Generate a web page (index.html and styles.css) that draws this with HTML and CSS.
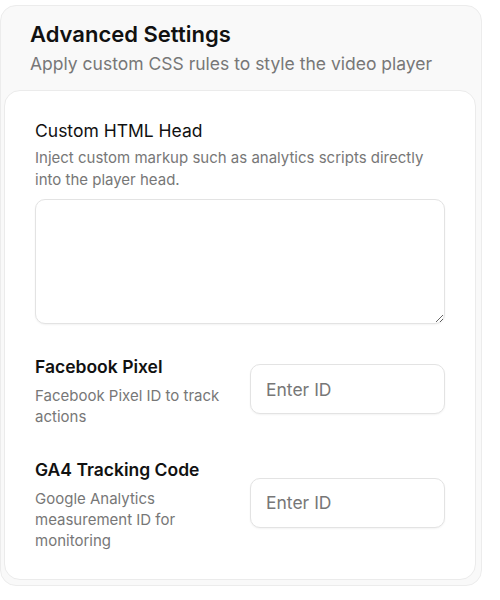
FILE: index.html
```html
<!DOCTYPE html>
<html lang="en">
<head>
    <meta charset="UTF-8">
    <meta name="viewport" content="width=device-width, initial-scale=1.0">
    <title>Advanced Settings</title>
    <link rel="stylesheet" href="styles.css">
</head>
<body>
    <div class="panel">
        <div class="panel-header">
            <h2>Advanced Settings</h2>
            <p>Apply custom CSS rules to style the video player</p>
        </div>

        <div class="card">
            <div class="field">
                <label for="customHead" class="label-head">Custom HTML Head</label>
                <p class="hint">Inject custom markup such as analytics scripts directly into the player head.</p>
                <textarea id="customHead"></textarea>
            </div>

            <div class="row">
                <div class="row-text">
                    <label for="fbPixel">Facebook Pixel</label>
                    <p class="hint">Facebook Pixel ID to track actions</p>
                </div>
                <input type="text" id="fbPixel" placeholder="Enter ID">
            </div>

            <div class="row">
                <div class="row-text">
                    <label for="ga4">GA4 Tracking Code</label>
                    <p class="hint">Google Analytics measurement ID for monitoring</p>
                </div>
                <input type="text" id="ga4" placeholder="Enter ID">
            </div>
        </div>
    </div>
</body>
</html>
```

FILE: styles.css
```css
body {
    font-family: Inter, "Noto Sans", sans-serif;
    margin: 0;
    padding: 5px 0 0 0;
    background-color: white;
    color: #111;
}
.panel {
    width: 482px;
    box-sizing: border-box;
    background-color: #f9f9f9;
    border: 1px solid #ececec;
    border-radius: 16px;
    padding: 0 5px 5px 3px;
}
.panel-header {
    padding: 13px 26px 12px 26px;
}
.panel-header h2 {
    margin: 0;
    font-size: 22px;
    line-height: 31px;
    font-weight: 600;
    color: #111;
}
.panel-header p {
    margin: 0;
    font-size: 17.5px;
    line-height: 28px;
    color: #777;
}
.card {
    background-color: white;
    border: 1px solid #ebebeb;
    border-radius: 16px;
    padding: 28px 30px 28px 30px;
}
label {
    display: block;
    font-size: 17.5px;
    line-height: 24px;
    font-weight: 600;
    color: #111;
}
.label-head {
    font-weight: 400;
}
.hint {
    margin: 4px 0 0 0;
    font-size: 15px;
    line-height: 21.5px;
    color: #777;
}
textarea {
    display: block;
    width: 100%;
    height: 125px;
    margin-top: 9px;
    box-sizing: border-box;
    border: 1px solid #e3e3e3;
    border-radius: 10px;
    box-shadow: 0 1px 2px rgba(0,0,0,0.05);
    font-family: inherit;
    font-size: 15px;
    padding: 10px 14px;
}
.row {
    display: grid;
    grid-template-columns: 1fr 1fr;
    gap: 20px;
    align-items: center;
    margin-top: 31px;
}
.row + .row {
    margin-top: 31px;
}
.row .hint {
    margin-top: 6px;
    line-height: 21px;
}
input {
    width: 100%;
    height: 50px;
    margin-bottom: 4px;
    box-sizing: border-box;
    border: 1px solid #e3e3e3;
    border-radius: 10px;
    box-shadow: 0 1px 2px rgba(0,0,0,0.05);
    padding: 0 15px;
    font-family: inherit;
    font-size: 17.5px;
    color: #111;
}
input::placeholder {
    color: #777;
}
```
